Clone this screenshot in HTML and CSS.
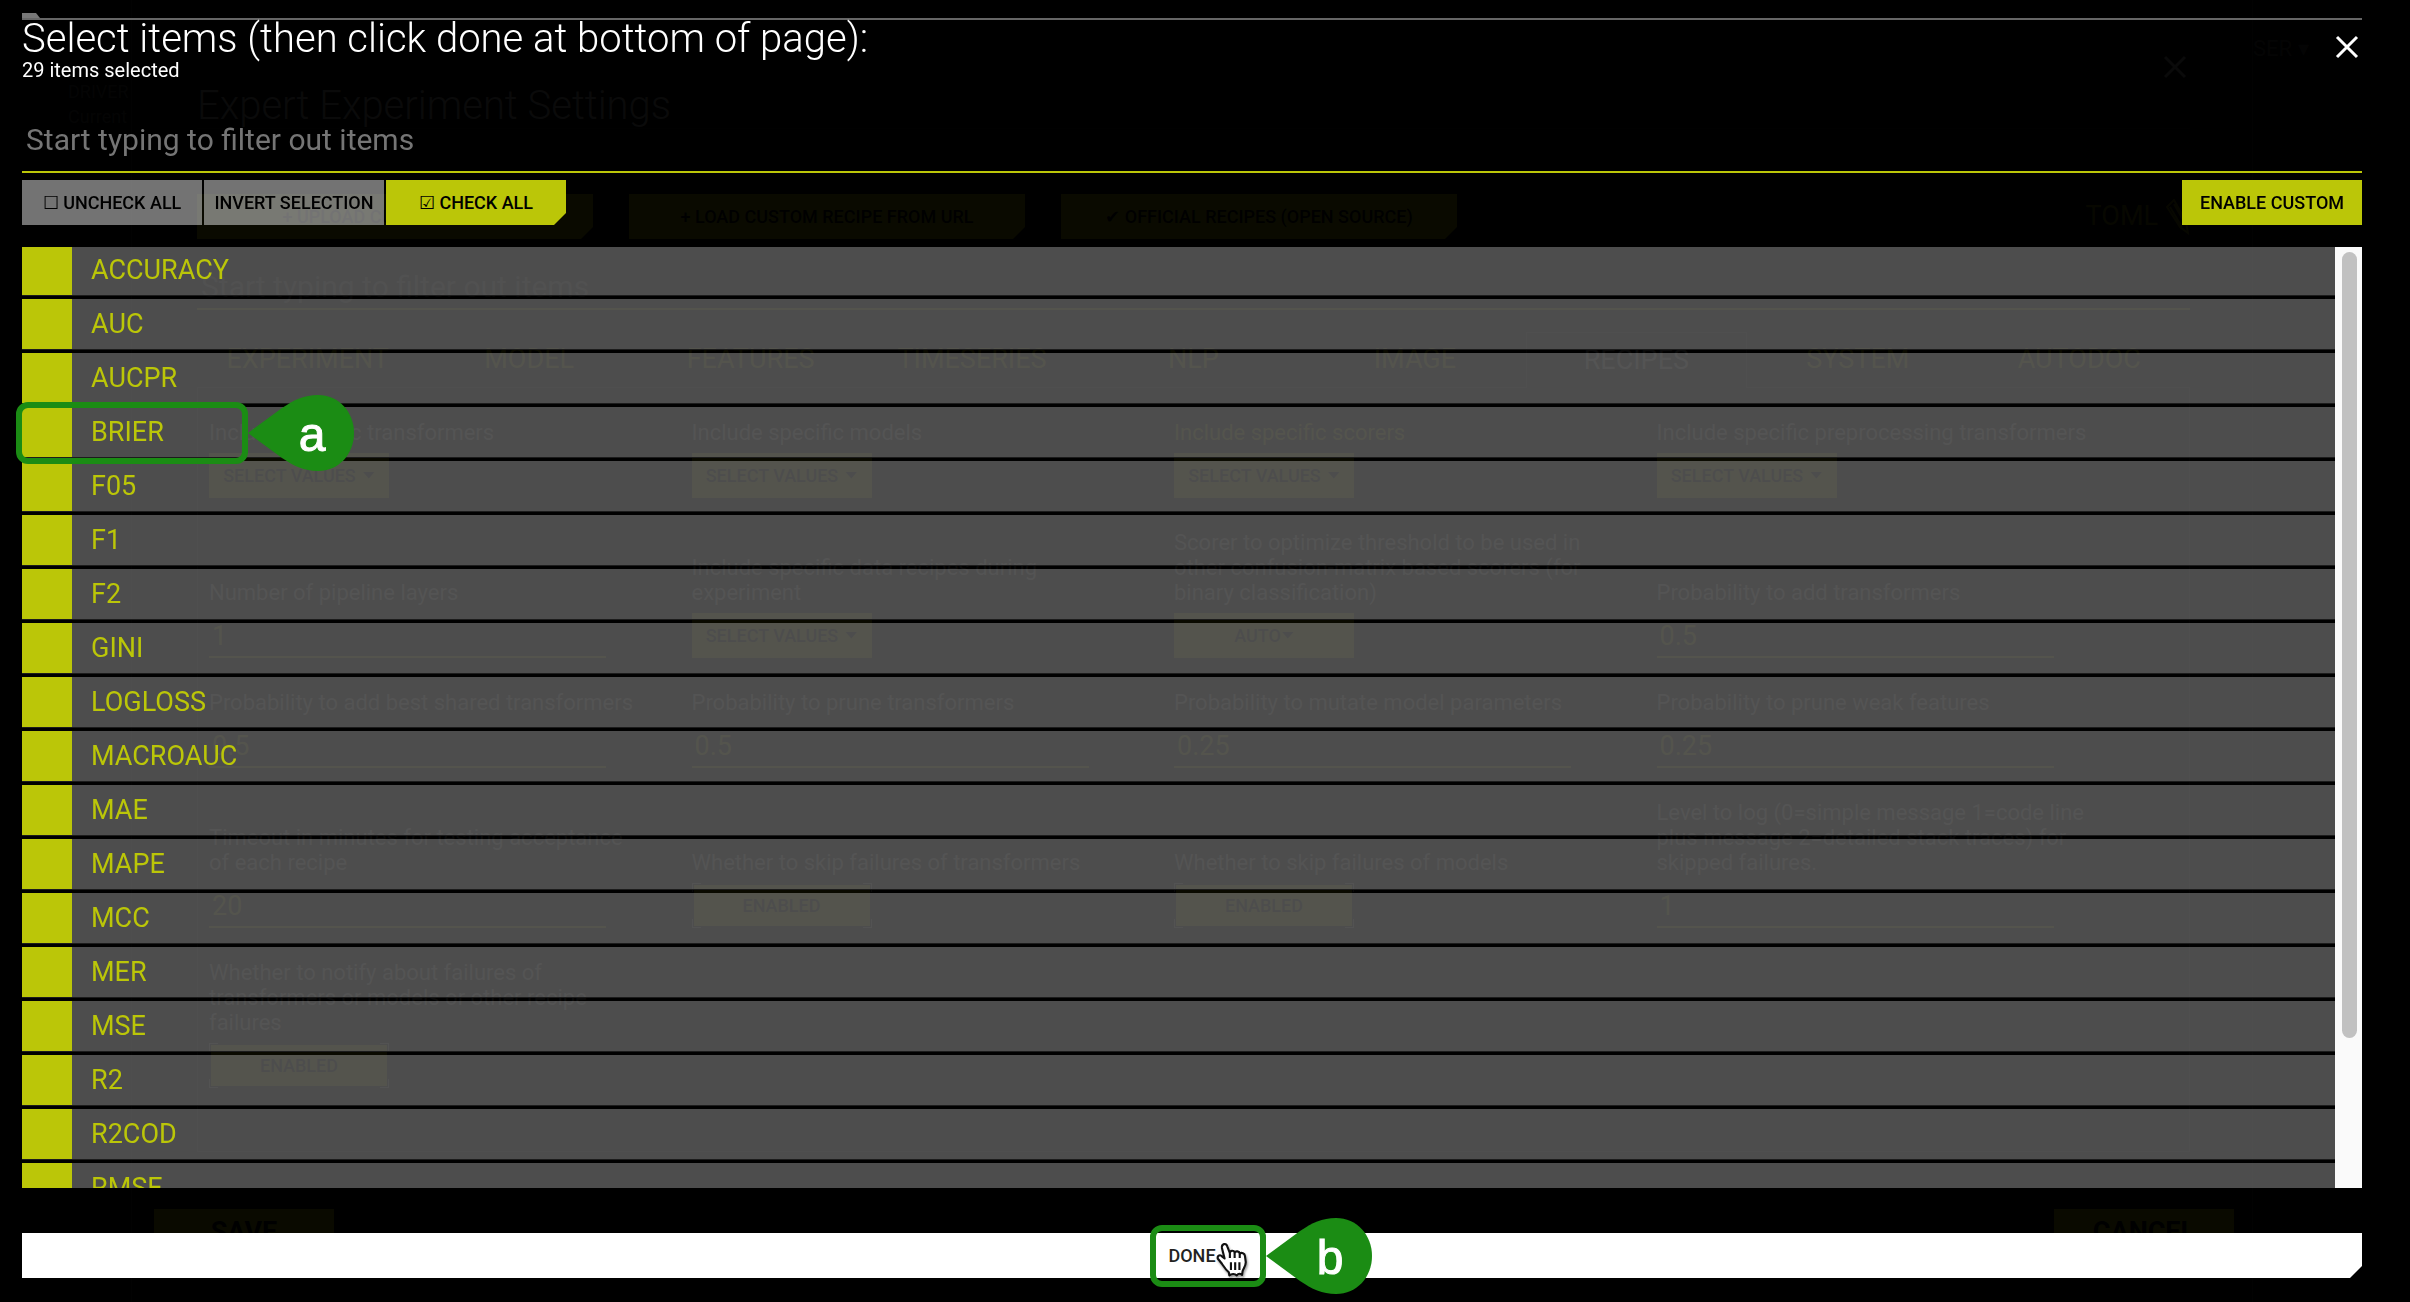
FILE: index.html
```html
<!DOCTYPE html>
<html lang="en">
<head>
<meta charset="utf-8">
<title>Expert Experiment Settings</title>
<link rel="stylesheet" href="styles.css">
</head>
<body>
<div class="page" aria-hidden="true" inert>
  <aside class="side">
    <p>DRIVER</p>
    <p>Current</p>
  </aside>
  <main class="panel">
    <div class="panel-body">
      <header class="panel-head">
        <h2 class="title">Expert Experiment Settings</h2>
        <svg class="close" viewBox="0 0 24 24"><path d="M2 2 22 22M22 2 2 22"/></svg>
      </header>
      <div class="recipe-row">
        <button class="btn notched">+ UPLOAD CUSTOM RECIPE</button>
        <button class="btn notched">+ LOAD CUSTOM RECIPE FROM URL</button>
        <button class="btn notched">✔ OFFICIAL RECIPES (OPEN SOURCE)</button>
        <span class="toml">TOML <svg viewBox="0 0 24 36"><path d="M1 8 8 1 20 22 22 34 14 28ZM4 8 16 28M8 5 20 26"/></svg></span>
      </div>
      <input class="filter" type="text" placeholder="Start typing to filter out items" aria-label="Filter settings">
      <nav class="tabs">
        <a href="#">EXPERIMENT</a><a href="#">MODEL</a><a href="#">FEATURES</a><a href="#">TIMESERIES</a><a href="#">NLP</a><a href="#">IMAGE</a><a href="#" class="current">RECIPES</a><a href="#">SYSTEM</a><a href="#">AUTODOC</a>
      </nav>
      <div class="settings">
        <div class="field"><p>Include specific transformers</p><button class="btn drop">SELECT VALUES</button></div>
        <div class="field"><p>Include specific models</p><button class="btn drop">SELECT VALUES</button></div>
        <div class="field changed"><p>Include specific scorers</p><button class="btn drop">SELECT VALUES</button></div>
        <div class="field"><p>Include specific preprocessing transformers</p><button class="btn drop">SELECT VALUES</button></div>

        <div class="field"><label for="f1">Number of pipeline layers</label><input id="f1" value="1"></div>
        <div class="field"><p>Include specific data recipes during<br>experiment</p><button class="btn drop">SELECT VALUES</button></div>
        <div class="field"><p>Scorer to optimize threshold to be used in<br>other confusion-matrix based scorers (for<br>binary classification)</p><button class="btn drop tight">AUTO</button></div>
        <div class="field"><label for="f2">Probability to add transformers</label><input id="f2" value="0.5"></div>

        <div class="field"><label for="f3">Probability to add best shared transformers</label><input id="f3" value="0.5"></div>
        <div class="field"><label for="f4">Probability to prune transformers</label><input id="f4" value="0.5"></div>
        <div class="field"><label for="f5">Probability to mutate model parameters</label><input id="f5" value="0.25"></div>
        <div class="field"><label for="f6">Probability to prune weak features</label><input id="f6" value="0.25"></div>

        <div class="field"><label for="f7">Timeout in minutes for testing acceptance<br>of each recipe</label><input id="f7" value="20"></div>
        <div class="field"><p>Whether to skip failures of transformers</p><button class="btn toggle">ENABLED</button></div>
        <div class="field"><p>Whether to skip failures of models</p><button class="btn toggle">ENABLED</button></div>
        <div class="field"><label for="f8">Level to log (0=simple message 1=code line<br>plus message 2=detailed stack traces) for<br>skipped failures.</label><input id="f8" value="1"></div>

        <div class="field"><p>Whether to notify about failures of<br>transformers or models or other recipe<br>failures</p><button class="btn toggle">ENABLED</button></div>
      </div>
    </div>
    <footer class="panel-foot">
      <button class="btn big">SAVE</button>
      <button class="btn big">CANCEL</button>
    </footer>
  </main>
  <aside class="user">SER ▾</aside>
</div>

<div class="dialog" role="dialog" aria-labelledby="dialog-title">
  <div class="dialog-tab"></div>
  <header class="dialog-head">
    <div>
      <h1 class="title" id="dialog-title">Select items (then click done at bottom of page):</h1>
      <p class="count">29 items selected</p>
    </div>
    <button class="close-btn" aria-label="Close"><svg class="close" viewBox="0 0 24 24"><path d="M2 2 22 22M22 2 2 22"/></svg></button>
  </header>
  <input class="filter dialog-filter" type="text" placeholder="Start typing to filter out items" aria-label="Filter items">
  <div class="actions">
    <button class="btn muted">☐ UNCHECK ALL</button>
    <button class="btn muted">INVERT SELECTION</button>
    <button class="btn notched">☑ CHECK ALL</button>
    <button class="btn custom">ENABLE CUSTOM</button>
  </div>
  <div class="list-wrap">
    <ul class="list">
      <li><label><input type="checkbox" checked>ACCURACY</label></li>
      <li><label><input type="checkbox" checked>AUC</label></li>
      <li><label><input type="checkbox" checked>AUCPR</label></li>
      <li><label><input type="checkbox" checked>BRIER</label></li>
      <li><label><input type="checkbox" checked>F05</label></li>
      <li><label><input type="checkbox" checked>F1</label></li>
      <li><label><input type="checkbox" checked>F2</label></li>
      <li><label><input type="checkbox" checked>GINI</label></li>
      <li><label><input type="checkbox" checked>LOGLOSS</label></li>
      <li><label><input type="checkbox" checked>MACROAUC</label></li>
      <li><label><input type="checkbox" checked>MAE</label></li>
      <li><label><input type="checkbox" checked>MAPE</label></li>
      <li><label><input type="checkbox" checked>MCC</label></li>
      <li><label><input type="checkbox" checked>MER</label></li>
      <li><label><input type="checkbox" checked>MSE</label></li>
      <li><label><input type="checkbox" checked>R2</label></li>
      <li><label><input type="checkbox" checked>R2COD</label></li>
      <li><label><input type="checkbox" checked>RMSE</label></li>
    </ul>
    <div class="track"><div class="thumb"></div></div>
  </div>
  <footer class="dialog-foot">
    <button class="btn done notched">DONE</button>
    <div class="callout callout-b">
      <div class="ring"></div>
      <div class="pin"><svg viewBox="0 0 106 76"><path d="M0 38L34 13C46 5 56 0 70 0C91 0 106 17 106 38C106 59 91 76 70 76C56 76 46 71 34 63Z"/></svg><span>b</span></div>
      <svg class="hand" viewBox="0 0 30 34"><path d="M8 16.500L5.500 6.500C5 2.500 9.500 1.500 10.500 5L13 11.500C13 8.500 17 8.500 17.500 11C18.500 9 22 9.500 22.300 12C24 10.500 27 11.500 27.200 14L28 20C28 24 25.500 26 25 28.500L24.500 32C22.500 30.500 21 30.500 19.500 32.500C17.500 30.500 14.500 31 12.500 32.500L12 29.500C9 27 7.500 24.500 5.500 21.500L1.500 16.500C1 13.500 4 12.500 5.500 14.500Z"/><path d="M13 11.500V16M17.500 11V16M22.300 12V16M14 20V27.500M18 20V27.500M22 20V27.500"/></svg>
    </div>
  </footer>
  <div class="callout callout-a">
    <div class="ring"></div>
    <div class="pin"><svg viewBox="0 0 106 76"><path d="M0 38L34 13C46 5 56 0 70 0C91 0 106 17 106 38C106 59 91 76 70 76C56 76 46 71 34 63Z"/></svg><span>a</span></div>
  </div>
</div>
</body>
</html>
```
FILE: styles.css
```css
:root {
  --accent: #bbc608;
  --mark: #1b8c14;
}

* {
  box-sizing: border-box;
}

body {
  margin: 0;
  background: #000;
  color: #fff;
  font-family: Roboto, sans-serif;
  font-size: 22px;
  line-height: 25px;
}

h1, h2, p, ul {
  margin: 0;
  padding: 0;
  font-weight: 400;
}

button, input {
  margin: 0;
  border: 0;
  border-radius: 0;
  font-family: inherit;
}

.title {
  font-size: 40px;
  font-weight: 300;
  line-height: 38px;
}

.close {
  display: block;
  width: 24px;
  height: 24px;
  fill: none;
  stroke: #fff;
  stroke-width: 3;
}

.btn {
  width: 180px;
  height: 45px;
  padding: 0;
  background: var(--accent);
  color: #000;
  font-size: 18px;
  font-weight: 500;
  line-height: 24px;
  white-space: nowrap;
}

.notched {
  clip-path: polygon(0 0, 100% 0, 100% calc(100% - 12px), calc(100% - 12px) 100%, 0 100%);
}

.filter {
  display: block;
  width: 100%;
  height: 64px;
  padding: 0 4px 2px;
  border-bottom: 2px solid var(--accent);
  background: none;
  color: #fff;
  font-size: 30px;
}

.filter::placeholder {
  color: #757575;
  opacity: 1;
}

/* Settings page behind the dialog */
.page {
  display: grid;
  grid-template-columns: 131px 1fr 157px;
  height: 100vh;
  overflow: hidden;
}

.side {
  padding: 79px 0 0 68px;
  color: #555;
  font-size: 18px;
}

.user {
  padding-top: 36px;
  color: #555;
}

.panel {
  display: flex;
  flex-direction: column;
  gap: 57px;
  padding: 18px 18px 0 22px;
  border-left: 1px solid #333;
  border-right: 1px solid #333;
}

.panel-body {
  display: flex;
  flex-direction: column;
  padding: 0 44px 0 43px;
}

.panel-head {
  display: flex;
  justify-content: space-between;
  align-items: flex-end;
  height: 111px;
  padding: 0 3px 3px 0;
  border-bottom: 1px solid #222;
  color: #bbb;
}

.panel-head .close {
  margin-bottom: 46px;
  stroke: #bbb;
}

.recipe-row {
  display: flex;
  gap: 36px;
  margin-top: 65px;
}

.recipe-row .btn {
  width: 396px;
}

.toml {
  display: flex;
  gap: 8px;
  align-items: center;
  margin-left: auto;
  color: var(--accent);
  font-size: 27px;
  opacity: 0.7;
}

.toml svg {
  width: 24px;
  height: 36px;
  fill: none;
  stroke: currentColor;
  stroke-width: 2;
}

.panel .filter {
  margin-top: 7px;
  padding-top: 20px;
}

.tabs {
  display: grid;
  grid-template-columns: repeat(9, 1fr);
  height: 56px;
  margin-top: 22px;
}

.tabs a {
  padding-top: 15px;
  border-bottom: 1px solid #444;
  color: var(--accent);
  font-size: 27px;
  text-align: center;
  text-decoration: none;
}

.tabs .current {
  border: 1px solid #444;
  border-bottom: 0;
  color: #bbb;
}

.settings {
  display: grid;
  grid-template-columns: repeat(4, 1fr);
  height: 764px;
  align-content: start;
  padding: 0 50px 0 11px;
  border: 1px solid #444;
  border-top: 0;
}

.field {
  display: flex;
  flex-direction: column;
  justify-content: flex-end;
  align-items: flex-start;
  gap: 8px;
  padding-top: 32px;
  color: #bbb;
  white-space: nowrap;
}

.field input {
  width: 397px;
  height: 45px;
  padding: 2px 3px 0;
  border-bottom: 2px solid var(--accent);
  background: none;
  color: var(--accent);
  font-size: 27px;
}

.changed {
  color: var(--accent);
}

.drop::after {
  content: "";
  display: inline-block;
  width: 12px;
  height: 7px;
  margin: 0 0 3px 7px;
  background: #000;
  clip-path: polygon(0 0, 100% 0, 50% 100%);
}

.tight::after {
  margin-left: 1px;
}

/* Filled face with a bracket at each corner */
.toggle {
  background:
    linear-gradient(var(--accent) 0 0) center / calc(100% - 4px) calc(100% - 4px) no-repeat,
    linear-gradient(90deg, #aaa 9px, transparent 9px calc(100% - 9px), #aaa calc(100% - 9px)) top / 100% 1px no-repeat,
    linear-gradient(90deg, #aaa 9px, transparent 9px calc(100% - 9px), #aaa calc(100% - 9px)) bottom / 100% 1px no-repeat,
    linear-gradient(#aaa 9px, transparent 9px calc(100% - 9px), #aaa calc(100% - 9px)) left / 1px 100% no-repeat,
    linear-gradient(#aaa 9px, transparent 9px calc(100% - 9px), #aaa calc(100% - 9px)) right / 1px 100% no-repeat;
}

.panel-foot {
  display: flex;
  justify-content: space-between;
}

.big {
  font-size: 27px;
  font-weight: 700;
}

/* Dialog */
.dialog {
  position: fixed;
  inset: 0;
  display: flex;
  flex-direction: column;
  padding: 13px 48px 24px 22px;
  background: rgba(0, 0, 0, 0.95);
}

.dialog-tab {
  flex: none;
  width: 18px;
  height: 5px;
  background: #777;
  clip-path: polygon(0 0, 14px 0, 100% 100%, 0 100%);
}

.dialog-head {
  display: flex;
  justify-content: space-between;
  align-items: flex-start;
  border-top: 2px solid #666;
}

.count {
  margin-top: 1px;
  font-size: 20px;
  line-height: 22px;
}

.close-btn {
  margin: 15px 3px 0 0;
  padding: 0;
  background: none;
}

.dialog-filter {
  flex: none;
  margin-top: 28px;
}

.actions {
  display: flex;
  gap: 2px;
  margin-top: 7px;
}

.muted {
  background: rgba(255, 255, 255, 0.45);
}

.custom {
  margin-left: auto;
}

.list-wrap {
  display: flex;
  flex: 1;
  min-height: 0;
  margin: 22px 0 45px;
  overflow: hidden;
}

.list {
  flex: 1;
  margin-top: -2px;
  list-style: none;
}

.list li {
  height: 51px;
  margin-bottom: 3px;
  border-bottom: 1px solid #1c1c1c;
  background: rgba(255, 255, 255, 0.3);
  background-clip: padding-box;
}

.list label {
  display: flex;
  gap: 19px;
  color: var(--accent);
  font-size: 27px;
  line-height: 50px;
}

.list input {
  width: 50px;
  height: 50px;
  appearance: none;
  background: var(--accent);
}

.track {
  width: 27px;
  padding: 5px 5px 0 7px;
  background: #fafafa;
}

.thumb {
  height: 84%;
  border-radius: 8px;
  background: #c1c1c1;
}

.dialog-foot {
  position: relative;
}

.done {
  display: block;
  width: 100%;
  background: #fff;
  color: #222;
}

/* Callouts drawn over the dialog */
.callout {
  position: absolute;
  display: flex;
  align-items: center;
  pointer-events: none;
}

.callout-a {
  left: 16px;
  top: 395px;
}

.callout-b {
  left: calc(50% - 42px);
  top: -15px;
}

.ring {
  width: 232px;
  height: 62px;
  border: 6px solid var(--mark);
  border-radius: 12px;
}

.callout-b .ring {
  width: 116px;
}

.pin {
  position: relative;
  width: 106px;
  height: 76px;
}

.pin svg {
  display: block;
  fill: var(--mark);
}

.pin span {
  position: absolute;
  inset: 0 0 0 22px;
  font-family: "Liberation Sans", sans-serif;
  font-size: 48px;
  line-height: 80px;
  text-align: center;
  -webkit-text-stroke: 1px #fff;
}

.hand {
  position: absolute;
  left: 66px;
  top: 23px;
  width: 32px;
  height: 36px;
  fill: #fff;
  stroke: #111;
  stroke-width: 2;
  stroke-linejoin: round;
  filter: drop-shadow(1px 2px 1px rgba(0, 0, 0, 0.4));
}
```
